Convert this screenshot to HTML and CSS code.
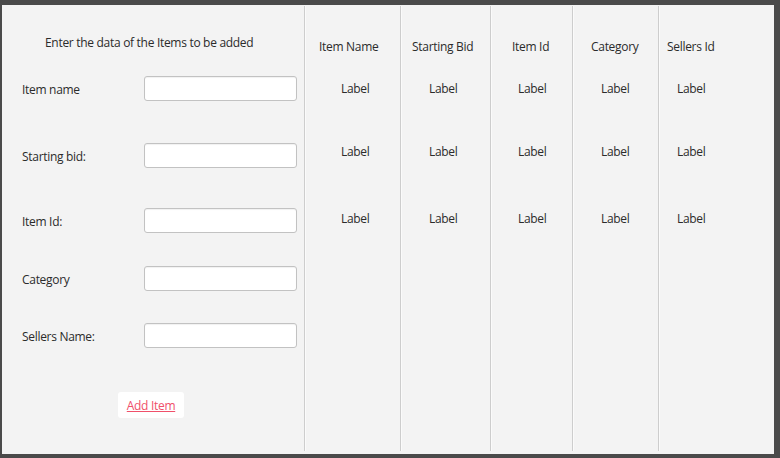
FILE: index.html
```html
<!DOCTYPE html>
<html>
<head>
<meta charset="utf-8">
<link rel="stylesheet" href="styles.css">
</head>
<body>
<div class="frame">
  <div class="form-panel">
    <div class="title">Enter the data of the Items to be added</div>
    <div class="row r1"><span class="lbl">Item name</span><input class="field" type="text"></div>
    <div class="row r2"><span class="lbl">Starting bid:</span><input class="field" type="text"></div>
    <div class="row r3"><span class="lbl">Item Id:</span><input class="field" type="text"></div>
    <div class="row r4"><span class="lbl">Category</span><input class="field" type="text"></div>
    <div class="row r5"><span class="lbl">Sellers Name:</span><input class="field" type="text"></div>
    <button class="add-btn">Add Item</button>
  </div>
  <div class="columns">
    <div class="col c1"><div class="head">Item Name</div><div class="cell l1">Label</div><div class="cell l2">Label</div><div class="cell l3">Label</div></div>
    <div class="col c2"><div class="head">Starting Bid</div><div class="cell l1">Label</div><div class="cell l2">Label</div><div class="cell l3">Label</div></div>
    <div class="col c3"><div class="head">Item Id</div><div class="cell l1">Label</div><div class="cell l2">Label</div><div class="cell l3">Label</div></div>
    <div class="col c4"><div class="head">Category</div><div class="cell l1">Label</div><div class="cell l2">Label</div><div class="cell l3">Label</div></div>
    <div class="col c5"><div class="head">Sellers Id</div><div class="cell l1">Label</div><div class="cell l2">Label</div><div class="cell l3">Label</div></div>
  </div>
</div>
</body>
</html>
```

FILE: styles.css
```css
html, body {
  margin: 0;
  padding: 0;
  background: #4a4a4a;
  width: 780px;
  height: 458px;
  overflow: hidden;
}
.frame {
  margin: 5px 6px 0 2px;
  height: 449px;
  background: #f3f3f3;
  display: flex;
  font-family: "Open Sans", "Noto Sans", sans-serif;
  font-size: 12px;
  line-height: 16px;
  color: #2b2b2b;
}
.form-panel {
  width: 302px;
  flex: none;
  display: flex;
  flex-direction: column;
  padding-top: 30px;
}
.title {
  padding-left: 43px;
  letter-spacing: -0.3px;
}
.row {
  display: flex;
  align-items: center;
  height: 25px;
  padding-left: 20px;
}
.lbl {
  width: 122px;
  flex: none;
  padding-top: 2px;
  letter-spacing: -0.3px;
}
.r1 { margin-top: 25px; }
.r2 { margin-top: 42px; }
.r3 { margin-top: 40px; }
.r4 { margin-top: 33px; }
.r5 { margin-top: 32px; }
.field {
  box-sizing: border-box;
  width: 153px;
  height: 25px;
  margin: 0;
  border: 1px solid #c2c2c2;
  border-radius: 3px;
  background: #fff;
  box-shadow: inset 0 1px 1px rgba(0,0,0,0.06);
  outline: none;
}
.add-btn {
  align-self: flex-start;
  margin-top: 44px;
  margin-left: 116px;
  box-sizing: border-box;
  width: 66px;
  height: 26px;
  padding: 0;
  border: none;
  border-radius: 3px;
  background: #fff;
  font-family: "Open Sans", "Noto Sans", sans-serif;
  font-size: 12px;
  color: #f0506a;
  text-decoration: underline;
  letter-spacing: -0.3px;
}
.columns {
  flex: 1;
  display: flex;
  margin-top: 1px;
  height: 445px;
}
.col {
  box-sizing: border-box;
  border-left: 1px solid #cdcdcd;
  box-shadow: inset 1px 0 0 #fafafa;
  display: flex;
  flex-direction: column;
  white-space: nowrap;
  letter-spacing: -0.3px;
}
.c1 { width: 96px; }
.c2 { width: 90px; }
.c3 { width: 82px; }
.c4 { width: 86px; }
.c5 { flex: 1; }
.head { margin-top: 33px; }
.l1 { margin-top: 26px; }
.l2 { margin-top: 47px; }
.l3 { margin-top: 51px; }
.c1 .head { padding-left: 14px; }
.c1 .cell { padding-left: 36px; }
.c2 .head { padding-left: 11px; }
.c2 .cell { padding-left: 28px; }
.c3 .head { padding-left: 21px; }
.c3 .cell { padding-left: 27px; }
.c4 .head { padding-left: 18px; }
.c4 .cell { padding-left: 28px; }
.c5 .head { padding-left: 8px; }
.c5 .cell { padding-left: 18px; }
```
